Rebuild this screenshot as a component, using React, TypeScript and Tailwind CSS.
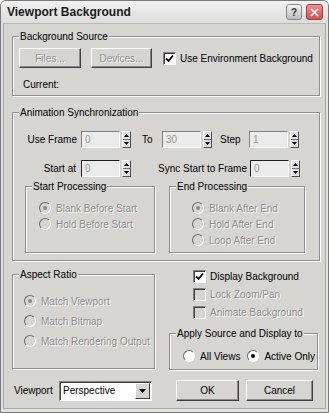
import React from "react";

const dim = "text-[#8e8e8e] [text-shadow:1px_1px_0_#fff]";

function Group({
  title,
  className,
  children,
}: {
  title: string;
  className?: string;
  children?: React.ReactNode;
}) {
  return (
    <div
      className={`relative border border-[#8f8f8f] shadow-[inset_1px_1px_0_#fff,1px_1px_0_#fff] ${className ?? ""}`}
    >
      <span className="absolute -top-[7px] left-[6px] bg-[#d6d5d2] px-[1px] leading-[13px] text-black">
        {title}
      </span>
      {children}
    </div>
  );
}

function Btn({ label, disabled, w }: { label: string; disabled?: boolean; w: string }) {
  return (
    <div
      className={`${w} h-[20px] flex items-center justify-center border border-t-white border-l-white border-b-[#404040] border-r-[#404040] shadow-[inset_-1px_-1px_0_#8a8a8a] bg-[#d6d5d2] ${disabled ? dim : "text-black"}`}
    >
      {label}
    </div>
  );
}

function Check({ label, checked, disabled }: { label: string; checked?: boolean; disabled?: boolean }) {
  return (
    <div className="flex items-center h-[18px]">
      <div
        className={`w-[13px] h-[13px] shrink-0 border border-t-[#808080] border-l-[#808080] border-b-white border-r-white shadow-[inset_1px_1px_0_#404040] flex items-center justify-center ${disabled ? "bg-[#d6d5d2]" : "bg-white"}`}
      >
        {checked && (
          <svg width="9" height="9" viewBox="0 0 9 9">
            <path d="M1 4.5 L3.5 7 L8 1.5" stroke="#000" strokeWidth="1.8" fill="none" />
          </svg>
        )}
      </div>
      <span className={`ml-[4px] ${disabled ? dim : "text-black"}`}>{label}</span>
    </div>
  );
}

function Radio({ label, checked, disabled }: { label: string; checked?: boolean; disabled?: boolean }) {
  return (
    <div className="flex items-center h-[16px]">
      <div
        className={`w-[12px] h-[12px] shrink-0 rounded-full border border-t-[#6a6a6a] border-l-[#6a6a6a] border-b-white border-r-white flex items-center justify-center ${disabled ? "bg-[#d6d5d2]" : "bg-white"}`}
      >
        {checked && (
          <div className={`w-[4px] h-[4px] rounded-full ${disabled ? "bg-[#8a8a8a]" : "bg-black"}`} />
        )}
      </div>
      <span className={`ml-[5px] ${disabled ? dim : "text-black"}`}>{label}</span>
    </div>
  );
}

function Spin({ value, dark }: { value: string; dark?: boolean }) {
  return (
    <div className="flex items-center gap-[2px]">
      <div
        className={`w-[39px] h-[17px] bg-[#ebebeb] border border-b-white border-r-white pl-[3px] leading-[15px] text-[#9a9a9a] ${dark ? "border-t-[#1e1e1e] border-l-[#1e1e1e]" : "border-t-[#808080] border-l-[#808080]"}`}
      >
        {value}
      </div>
      <div className="w-[9px] h-[17px] flex flex-col border border-t-white border-l-white border-b-[#505050] border-r-[#505050] bg-[#e2e2e2]">
        <div className="flex-1 flex items-center justify-center border-b border-[#707070]">
          <svg width="5" height="3" viewBox="0 0 5 3">
            <path d="M0 3 L2.5 0 L5 3 Z" fill="#000" />
          </svg>
        </div>
        <div className="flex-1 flex items-center justify-center">
          <svg width="5" height="3" viewBox="0 0 5 3">
            <path d="M0 0 L2.5 3 L5 0 Z" fill="#000" />
          </svg>
        </div>
      </div>
    </div>
  );
}

export default function App() {
  return (
    <div className="w-[329px] h-[413px] bg-[#e2e2e2] border border-[#7a7a7a] rounded-t-[6px] flex flex-col font-['Liberation_Sans',Arial,sans-serif] text-[10px] leading-[13px] whitespace-nowrap overflow-hidden">
      {/* Title bar */}
      <div className="h-[22px] shrink-0 flex items-center pl-[6px] pr-[5px] bg-gradient-to-b from-[#f2f2f2] to-[#dcdcdc]">
        <span className="font-bold text-[12px] text-[#1a1a1a]">Viewport Background</span>
        <div className="ml-auto flex items-center gap-[4px]">
          <div className="w-[16px] h-[16px] rounded-[3px] border border-[#8a8a8a] bg-gradient-to-b from-[#f4f4f4] to-[#bcbcbc] flex items-center justify-center text-[10px] font-bold text-[#333]">
            ?
          </div>
          <div className="w-[17px] h-[16px] rounded-[3px] border border-[#a04040] bg-gradient-to-b from-[#f09090] to-[#d05050] flex items-center justify-center">
            <svg width="9" height="9" viewBox="0 0 9 9">
              <path d="M1 1 L8 8 M8 1 L1 8" stroke="#fff" strokeWidth="1.6" />
            </svg>
          </div>
        </div>
      </div>

      {/* Body */}
      <div className="flex-1 mx-[2px] mb-[3px] bg-[#d6d5d2] border border-t-[#b8b8b8] border-l-[#a8a8a8] border-r-[#a8a8a8] border-b-[#a8a8a8] pl-[8px] pr-[5px] pt-[12px]">
        {/* Background Source */}
        <Group title="Background Source" className="h-[60px]">
          <div className="flex items-center pl-[6px] pt-[11px]">
            <Btn label="Files..." disabled w="w-[62px]" />
            <div className="ml-[10px]">
              <Btn label="Devices..." disabled w="w-[61px]" />
            </div>
            <div className="ml-[11px]">
              <Check label="Use Environment Background" checked />
            </div>
          </div>
          <div className="ml-[10px] mt-[10px] text-black">Current:</div>
        </Group>

        {/* Animation Synchronization */}
        <Group title="Animation Synchronization" className="mt-[16px] h-[149px]">
          <div className="flex items-center pt-[18px]">
            <span className="w-[66px] text-right pr-[2px] text-black">Use Frame</span>
            <div className="ml-[2px]">
              <Spin value="0" />
            </div>
            <span className="w-[31px] pl-[11px] text-black">To</span>
            <Spin value="30" />
            <span className="w-[37px] pl-[8px] text-black">Step</span>
            <Spin value="1" />
          </div>
          <div className="flex items-center mt-[12px]">
            <span className="w-[66px] text-right pr-[3px] text-black">Start at</span>
            <div className="ml-[2px]">
              <Spin value="0" dark />
            </div>
            <span className="w-[119px] text-right pr-[3px] text-black">Sync Start to Frame</span>
            <Spin value="0" dark />
          </div>
          <div className="flex mt-[9px] ml-[12px] gap-[14px]">
            <Group title="Start Processing" className="w-[130px] h-[67px]">
              <div className="pl-[13px] pt-[13px] flex flex-col">
                <Radio label="Blank Before Start" checked disabled />
                <Radio label="Hold Before Start" disabled />
              </div>
            </Group>
            <Group title="End Processing" className="w-[136px] h-[67px]">
              <div className="pl-[22px] pt-[13px] flex flex-col">
                <Radio label="Blank After End" checked disabled />
                <Radio label="Hold After End" disabled />
                <Radio label="Loop After End" disabled />
              </div>
            </Group>
          </div>
        </Group>

        {/* Lower section */}
        <div className="flex gap-[14px]">
          <div className="w-[143px]">
            <Group title="Aspect Ratio" className="mt-[13px] h-[95px]">
              <div className="pl-[11px] pt-[18px] flex flex-col gap-[4px]">
                <Radio label="Match Viewport" checked disabled />
                <Radio label="Match Bitmap" disabled />
                <Radio label="Match Rendering Output" disabled />
              </div>
            </Group>
          </div>
          <div className="w-[149px]">
            <div className="pl-[24px] pt-[6px] flex flex-col">
              <Check label="Display Background" checked />
              <Check label="Lock Zoom/Pan" disabled />
              <Check label="Animate Background" disabled />
            </div>
            <Group title="Apply Source and Display to" className="mt-[12px] h-[37px]">
              <div className="flex pl-[13px] pt-[14px]">
                <Radio label="All Views" />
                <div className="ml-[7px]">
                  <Radio label="Active Only" checked />
                </div>
              </div>
            </Group>
          </div>
        </div>

        {/* Bottom row */}
        <div className="flex items-center mt-[10px]">
          <span className="w-[47px] pl-[2px] text-black">Viewport</span>
          <div className="w-[93px] h-[20px] flex items-center bg-white border border-t-[#808080] border-l-[#808080] border-b-white border-r-white shadow-[inset_1px_1px_0_#404040]">
            <span className="flex-1 pl-[3px] text-black">Perspective</span>
            <div className="w-[15px] h-[16px] mr-[1px] flex items-center justify-center bg-[#d6d5d2] border border-t-white border-l-white border-b-[#404040] border-r-[#404040]">
              <svg width="7" height="4" viewBox="0 0 7 4">
                <path d="M0 0 L3.5 4 L7 0 Z" fill="#000" />
              </svg>
            </div>
          </div>
          <div className="ml-[24px]">
            <Btn label="OK" w="w-[63px] h-[21px]" />
          </div>
          <div className="ml-[7px]">
            <Btn label="Cancel" w="w-[67px] h-[21px]" />
          </div>
        </div>
      </div>
    </div>
  );
}
